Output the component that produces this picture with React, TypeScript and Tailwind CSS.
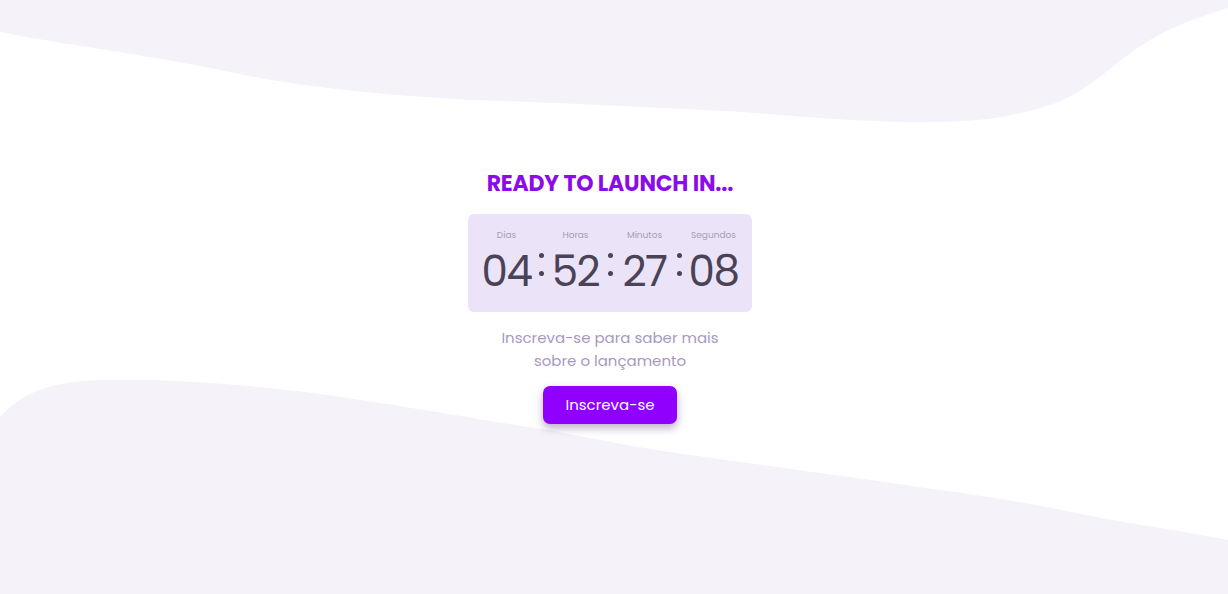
import React from "react";

const units = [
  { label: "Dias", value: "04" },
  { label: "Horas", value: "52" },
  { label: "Minutos", value: "27" },
  { label: "Segundos", value: "08" },
];

export default function App() {
  return (
    <div
      className="relative w-full h-[594px] overflow-hidden bg-white"
      style={{ fontFamily: "Poppins, 'Open Sans', sans-serif" }}
    >
      <svg
        className="absolute inset-0"
        width="1228"
        height="594"
        viewBox="0 0 1228 594"
        preserveAspectRatio="none"
      >
        <path
          d="M0 0 L1228 0 L1228 8 C1195 18 1170 28 1150 40 C1110 64 1090 92 1050 105 C1000 122 950 123 900 122 C820 120 760 112 705 110 C620 106 540 102 470 100 C380 95 300 87 235 73 C150 55 60 44 0 32 Z"
          fill="#f5f2fa"
        />
        <path
          d="M0 417 C20 395 45 382 100 380 C170 378 250 385 313 393 C400 405 470 418 548 430 C600 440 650 450 705 457 C790 469 860 478 940 490 C1000 498 1050 507 1096 517 C1150 527 1190 532 1228 540 L1228 594 L0 594 Z"
          fill="#f5f2fa"
        />
      </svg>

      <div className="relative flex h-full w-full flex-col items-center justify-center pr-[8px] pt-[3px]">
        <h1 className="text-[22px] font-bold leading-none tracking-[-0.2px] text-[#8c0bea]">
          READY TO LAUNCH IN...
        </h1>

        <div className="mt-[19px] flex h-[98px] w-[284px] items-start justify-center rounded-[6px] bg-[#ebe4f8] pt-[16px]">
          {units.map((u, i) => (
            <React.Fragment key={u.label}>
              {i > 0 && (
                <div className="flex h-[66px] w-[14px] flex-col items-center justify-start pt-[23px] gap-[13px]">
                  <span className="block h-[5px] w-[5px] rounded-full bg-[#4a4358]" />
                  <span className="block h-[5px] w-[5px] rounded-full bg-[#4a4358]" />
                </div>
              )}
              <div className="flex w-[55px] flex-col items-center">
                <span className="text-[9px] leading-[10px] text-[#a59db5]">
                  {u.label}
                </span>
                <span className="mt-[8px] text-[42px] leading-[48px] tracking-[-1.5px] text-[#4a4358]">
                  {u.value}
                </span>
              </div>
            </React.Fragment>
          ))}
        </div>

        <p className="mt-[14px] text-center text-[15px] leading-[23px] text-[#a898bf]">
          Inscreva-se para saber mais
          <br />
          sobre o lançamento
        </p>

        <button className="mt-[14px] h-[38px] w-[134px] rounded-[7px] bg-[#9000ff] text-[15px] text-white shadow-[0_4px_8px_rgba(60,20,100,0.35)]">
          Inscreva-se
        </button>
      </div>
    </div>
  );
}
